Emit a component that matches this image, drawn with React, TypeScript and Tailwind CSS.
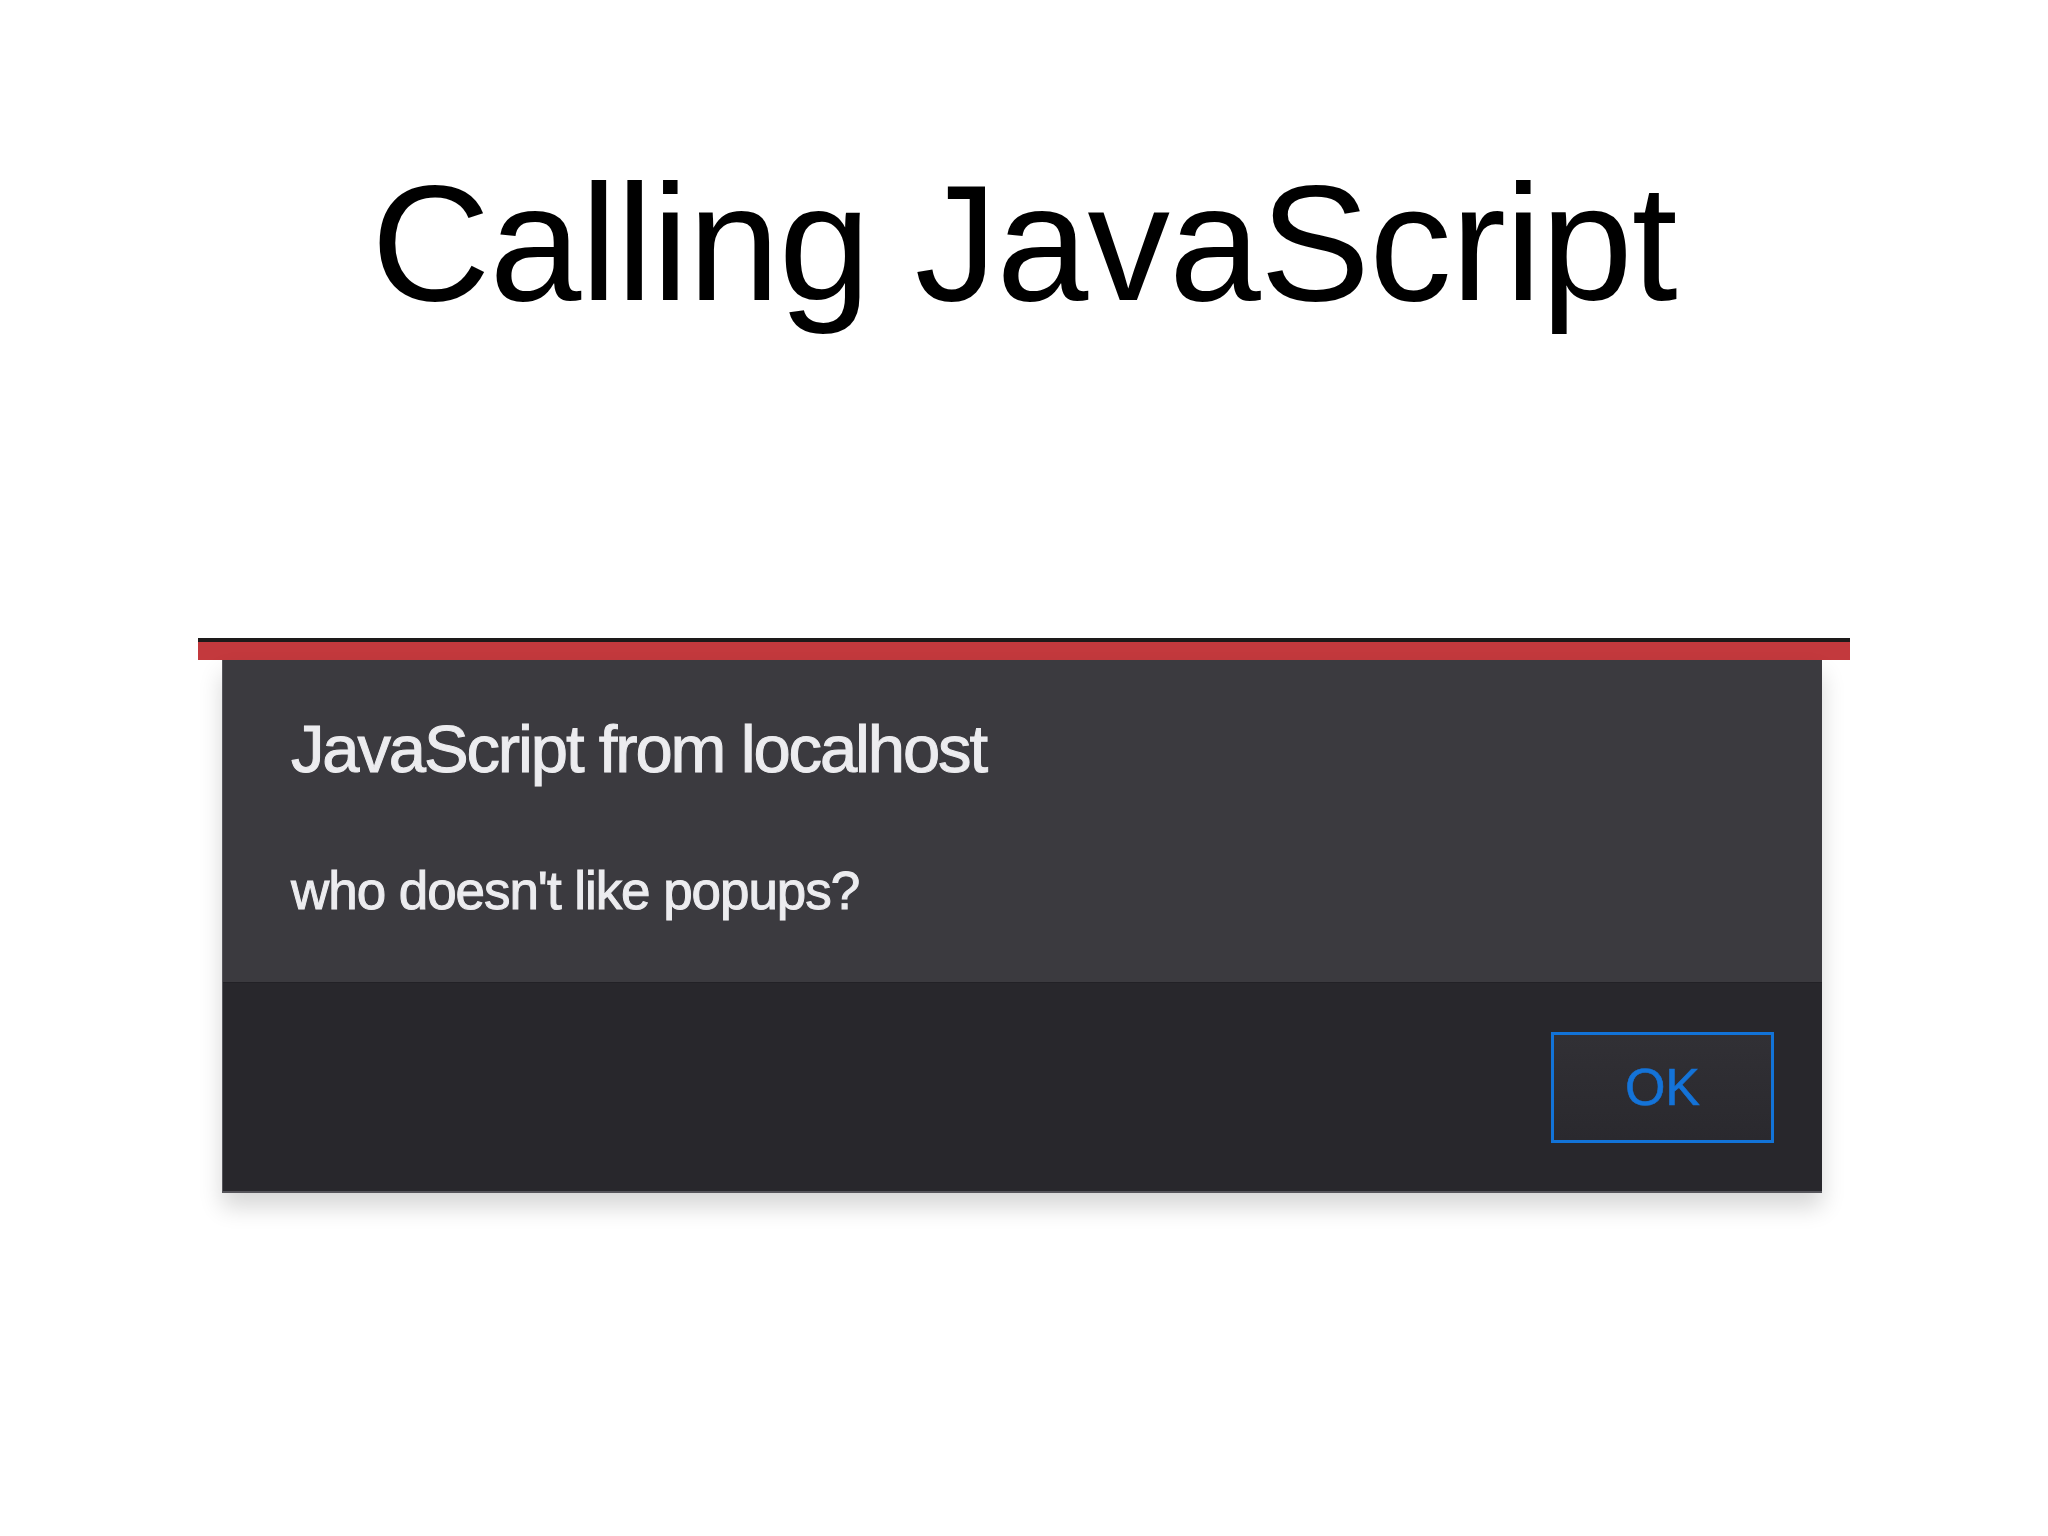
export default function App() {
  return (
    <div className="flex min-h-screen w-full flex-col items-center bg-white font-['Liberation_Sans',Arial,sans-serif]">
      <h1 className="pt-[161px] text-[165px] font-normal leading-none tracking-[-0.005em] text-black">
        Calling JavaScript
      </h1>

      <div className="mt-[312px] w-[1652px]">
        <div className="h-[4px] w-full bg-[#1d1a1a]" />
        <div className="h-[18px] w-full bg-[#c3393d]" />
        <AlertDialog />
      </div>
    </div>
  );
}

function AlertDialog() {
  return (
    <div className="ml-[24px] w-[1600px] border-b-2 border-l border-[#56555b] shadow-[0_14px_22px_rgba(0,0,0,0.16)]">
      <div className="h-[322px] bg-[#3b3a3f] pl-[68px] pt-[55px] text-[#ececef] [-webkit-text-stroke:1px_#ececef]">
        <p className="text-[67px] leading-none tracking-[-0.032em]">JavaScript from localhost</p>
        <p className="mt-[82px] text-[53px] leading-none tracking-[-0.02em]">who doesn't like popups?</p>
      </div>
      <div className="flex h-[209px] items-center justify-end border-t border-[#222126] bg-[#28272c] pr-[48px]">
        <button className="flex h-[111px] w-[223px] items-center justify-center border-[3px] border-[#1273d8] bg-gradient-to-b from-[#313035] to-[#2a292e] text-[52px] leading-none text-[#1473d8] [-webkit-text-stroke:0.6px_#1473d8]">
          OK
        </button>
      </div>
    </div>
  );
}
